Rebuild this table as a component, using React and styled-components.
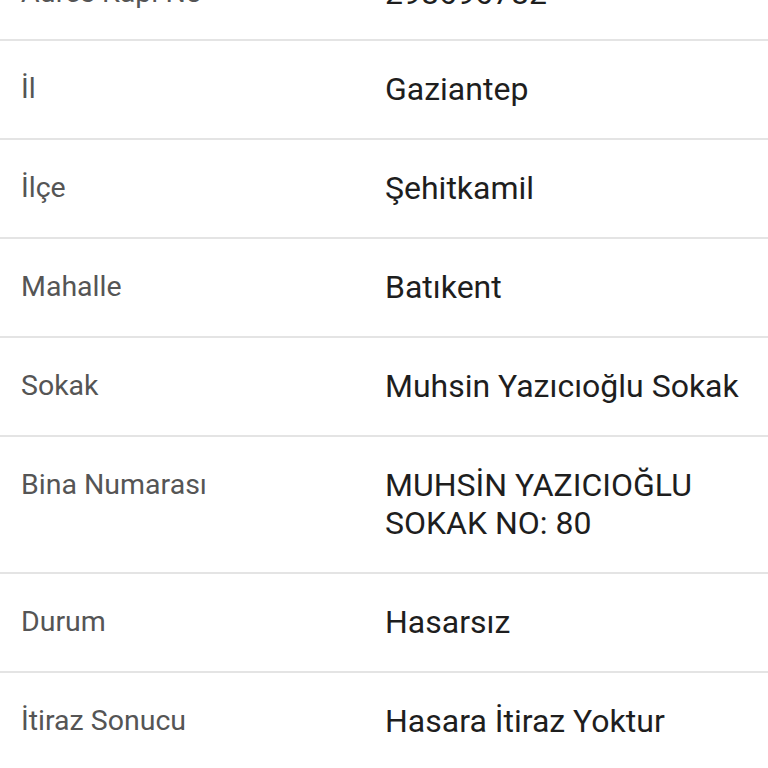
import React from "react";
import styled, { createGlobalStyle } from "styled-components";

const GlobalStyle = createGlobalStyle`
  html, body {
    margin: 0;
    padding: 0;
    background: #ffffff;
    overflow: hidden;
  }
  body {
    font-family: Roboto, "Noto Sans", "Liberation Sans", sans-serif;
  }
`;

const rows = [
  { label: "Adres Kapı No", value: "298696782" },
  { label: "İl", value: "Gaziantep" },
  { label: "İlçe", value: "Şehitkamil" },
  { label: "Mahalle", value: "Batıkent" },
  { label: "Sokak", value: "Muhsin Yazıcıoğlu Sokak" },
  { label: "Bina Numarası", value: "MUHSİN YAZICIOĞLU SOKAK NO: 80" },
  { label: "Durum", value: "Hasarsız" },
  { label: "İtiraz Sonucu", value: "Hasara İtiraz Yoktur" },
];

export default function App() {
  return (
    <>
      <GlobalStyle />
      <DetailList>
        {rows.map((row, i) => (
          <Row key={row.label} $first={i === 0}>
            <Label>{row.label}</Label>
            <Value>{row.value}</Value>
          </Row>
        ))}
      </DetailList>
    </>
  );
}

// list is scrolled: the first row sits mostly above the top edge
const DetailList = styled.div`
  display: flex;
  flex-direction: column;
  margin-top: -55px;
  background: #ffffff;
`;

const Row = styled.div`
  display: grid;
  grid-template-columns: 364px 1fr;
  align-items: start;
  padding: 29px 20px ${(p) => (p.$first ? "27px" : "30px")} 21px;
  border-bottom: 2px solid #e4e4e4;
`;

const Label = styled.div`
  font-size: 28.5px;
  line-height: 38px;
  color: #555555;
`;

const Value = styled.div`
  font-size: 32px;
  line-height: 38px;
  color: #1e1e1e;
`;
